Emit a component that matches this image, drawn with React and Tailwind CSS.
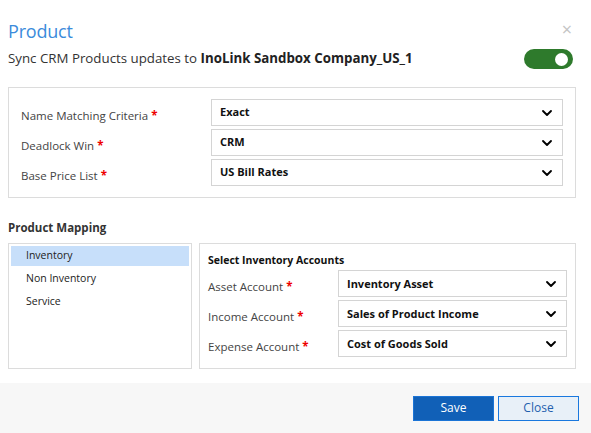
import { ChevronDown } from "lucide-react";

const topFields = [
    { label: "Name Matching Criteria", value: "Exact" },
    { label: "Deadlock Win", value: "CRM" },
    { label: "Base Price List", value: "US Bill Rates" },
];

const accountFields = [
    { label: "Asset Account", value: "Inventory Asset" },
    { label: "Income Account", value: "Sales of Product Income" },
    { label: "Expense Account", value: "Cost of Goods Sold" },
];

const mappingItems = ["Inventory", "Non Inventory", "Service"];

function Select({ value, className }) {
    return (
        <div className={`flex items-center justify-between h-[27px] border border-[#d4d4d4] bg-white pl-2 pr-[7px] ${className}`}>
            <span className="text-[11px] font-bold text-[#111]">{value}</span>
            <ChevronDown className="size-[16px] text-black" strokeWidth={2.8} />
        </div>
    );
}

function Label({ text }) {
    return (
        <span className="block text-[11.5px] leading-[17px] text-[#444] pt-[8px]">
            {text} <span className="text-[#e00] font-bold">*</span>
        </span>
    );
}

export default function App() {
    return (
        <div
            className="w-[591px] h-[433px] bg-white flex flex-col overflow-hidden"
            style={{ fontFamily: '"Segoe UI", "Open Sans", sans-serif' }}
        >
            {/* header */}
            <div className="pl-2 pr-[18px] pt-[16px]">
                <div className="flex items-start justify-between">
                    <h1 className="text-[18px] leading-[26px] tracking-[-0.2px] text-[#3b8bdb] pt-[2px]">Product</h1>
                    <span className="text-[18px] leading-none text-[#c4c4c4] mt-[4px] mr-[1px]">×</span>
                </div>
                <div className="flex items-center justify-between mt-[5px]">
                    <p className="text-[13.3px] text-[#333]">
                        Sync CRM Products updates to <span className="font-bold text-[#222]">InoLink Sandbox Company_US_1</span>
                    </p>
                    <div className="w-[49px] h-[20px] rounded-full bg-[#2e7a2c] flex items-center justify-end pr-[5px]">
                        <div className="size-[13px] rounded-full bg-white" />
                    </div>
                </div>
            </div>

            {/* general settings */}
            <div className="ml-2 mr-[15px] mt-[18px] border border-[#dcdcdc] pl-[12px] pr-[12px] pt-[11px] pb-[11px] flex flex-col gap-[3px]">
                {topFields.map((f) => (
                    <div key={f.label} className="flex items-start">
                        <div className="w-[190px]"><Label text={f.label} /></div>
                        <Select value={f.value} className="flex-1" />
                    </div>
                ))}
            </div>

            {/* product mapping */}
            <h2 className="ml-2 mt-[21px] text-[11.5px] font-bold text-[#333]">Product Mapping</h2>
            <div className="flex gap-[7px] ml-2 mr-[15px] mt-[7px] h-[126px]">
                <div className="w-[184px] border border-[#dcdcdc] p-[2px] flex flex-col">
                    {mappingItems.map((item, i) => (
                        <div
                            key={item}
                            className={`h-[20px] pl-[15px] flex items-center text-[10.5px] text-[#222] ${i === 0 ? "bg-[#c7dffa]" : ""} ${i > 0 ? "mt-[3px]" : ""}`}
                        >
                            {item}
                        </div>
                    ))}
                </div>
                <div className="flex-1 border border-[#dcdcdc] pl-[8px] pr-[8px] pt-[8px]">
                    <div className="text-[10.5px] font-bold text-[#111] leading-[17px]">Select Inventory Accounts</div>
                    <div className="flex flex-col gap-[3px] mt-[1px]">
                        {accountFields.map((f) => (
                            <div key={f.label} className="flex items-start">
                                <div className="w-[130px]"><Label text={f.label} /></div>
                                <Select value={f.value} className="flex-1" />
                            </div>
                        ))}
                    </div>
                </div>
            </div>

            {/* footer */}
            <div className="mt-auto h-[50px] bg-[#f7f7f7] flex items-center justify-end gap-[4px] pr-[12px]">
                <button className="w-[81px] h-[25px] bg-[#1160b7] border border-[#1b74d6] text-white text-[12px]">Save</button>
                <button className="w-[81px] h-[25px] bg-[#e8f0f8] border border-[#1a78de] text-[#1f5fae] text-[12px]">Close</button>
            </div>
        </div>
    );
}
